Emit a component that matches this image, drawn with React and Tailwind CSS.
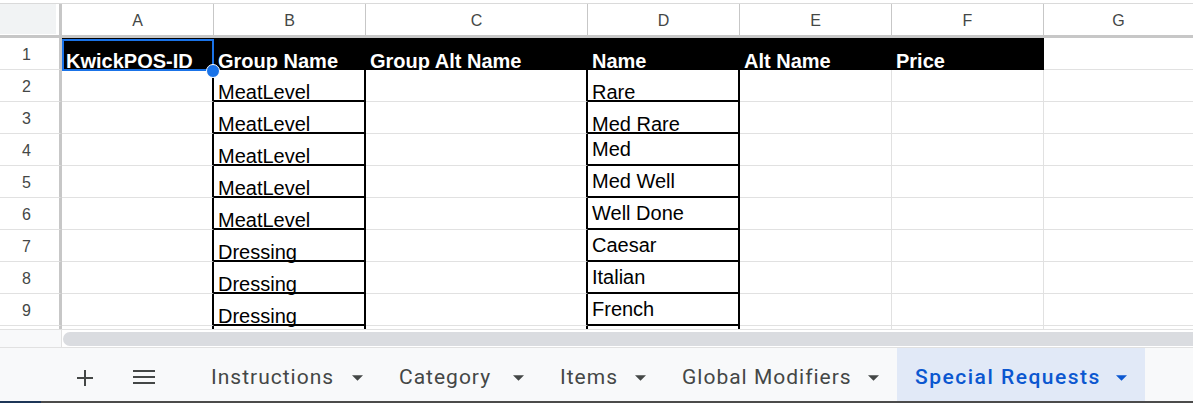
import clsx from 'clsx'

const letters = [
  { l: 'A', w: 'w-[152px]' },
  { l: 'B', w: 'w-[152px]' },
  { l: 'C', w: 'w-[222px]' },
  { l: 'D', w: 'w-[152px]' },
  { l: 'E', w: 'w-[152px]' },
  { l: 'F', w: 'w-[152px]' },
]

const headers = ['KwickPOS-ID', 'Group Name', 'Group Alt Name', 'Name', 'Alt Name', 'Price']

const rows = [
  ['MeatLevel', 'Rare'],
  ['MeatLevel', 'Med Rare'],
  ['MeatLevel', 'Med'],
  ['MeatLevel', 'Med Well'],
  ['MeatLevel', 'Well Done'],
  ['Dressing', 'Caesar'],
  ['Dressing', 'Italian'],
  ['Dressing', 'French'],
]

const tabs = [
  { name: 'Instructions', w: 'w-[188px]' },
  { name: 'Category', w: 'w-[161px]' },
  { name: 'Items', w: 'w-[122px]' },
  { name: 'Global Modifiers', w: 'w-[233px]' },
  { name: 'Special Requests', w: 'w-[248px]', active: true },
]

const cellBase = 'h-full shrink-0 flex items-end pl-[4px] whitespace-nowrap'
const grayCell = 'border-r border-b border-[#e1e1e1]'
const blackRight = 'border-r-2 border-r-black border-b border-b-[#e1e1e1]'
const boxed = 'border-r-2 border-b-2 border-black'

function RowHead({ n, className }) {
  return (
    <div className={clsx('w-[62px] h-full shrink-0 flex items-center justify-center pr-[6px] pt-[3px] text-[16px] leading-[20px] text-[#444746] border-r-[3px] border-r-[#c7c7c7] border-b border-b-[#e1e1e1]', className)}>
      {n}
    </div>
  )
}

function Caret({ className }) {
  return (
    <svg className={className} width="11" height="6" viewBox="0 0 10 5">
      <path d="M0 0L5 5L10 0Z" fill="currentColor" />
    </svg>
  )
}

export default function App() {
  return (
    <div className="w-[1193px] h-[404px] overflow-hidden bg-white font-['Liberation_Sans',Arial,sans-serif]">
      <div className="relative">
        {/* column letters */}
        <div className="pt-[3px]">
          <div className="border-t border-[#dadada] flex h-[35px] border-b-[3px] border-b-[#c7c7c7]">
            <div className="w-[62px] h-full shrink-0 border-r-[3px] border-[#c7c7c7]">
              <div className="w-[56px] h-[30px] bg-[#f1f3f4]"></div>
            </div>
            {letters.map((c) => (
              <div key={c.l} className={clsx('h-full shrink-0 flex items-center justify-center pt-[3px] text-[16px] text-[#444746] border-r border-[#c7c7c7]', c.w)}>
                {c.l}
              </div>
            ))}
            <div className="flex-1 h-full flex items-center justify-center pt-[3px] text-[16px] text-[#444746]">G</div>
          </div>
        </div>

        {/* row 1 headers */}
        <div className="flex h-[32px] text-[20px] leading-[16px]">
          <RowHead n={1} />
          {letters.map((c, i) => (
            <div key={c.l} className={clsx(cellBase, c.w, 'bg-black text-white font-bold border-r border-b border-black')}>
              {headers[i]}
            </div>
          ))}
          <div className="flex-1 h-full border-b border-[#e1e1e1]"></div>
        </div>

        {rows.map((r, i) => (
          <div key={i} className="flex h-[32px] text-[20px] leading-[16px] text-black">
            <RowHead n={i + 2} />
            <div className={clsx(cellBase, 'w-[152px]', blackRight)}></div>
            <div className={clsx(cellBase, 'w-[152px]', boxed)}>{r[0]}</div>
            <div className={clsx(cellBase, 'w-[222px]', blackRight)}></div>
            <div className={clsx(cellBase, 'w-[152px]', boxed, i >= 2 && 'pb-[7px]')}>{r[1]}</div>
            <div className={clsx(cellBase, 'w-[152px]', grayCell)}></div>
            <div className={clsx(cellBase, 'w-[152px]', grayCell)}></div>
            <div className="flex-1 h-full border-b border-[#e1e1e1]"></div>
          </div>
        ))}

        {/* partial row 10 */}
        <div className="flex h-[4px] border-b border-[#e1e1e1]">
          <div className="w-[62px] h-full shrink-0 border-r-[3px] border-[#c7c7c7]"></div>
          <div className="w-[152px] h-full shrink-0 border-r-2 border-black"></div>
          <div className="w-[152px] h-full shrink-0 border-r-2 border-black"></div>
          <div className="w-[222px] h-full shrink-0 border-r-2 border-black"></div>
          <div className="w-[152px] h-full shrink-0 border-r-2 border-black"></div>
          <div className="w-[152px] h-full shrink-0 border-r border-[#e1e1e1]"></div>
          <div className="w-[152px] h-full shrink-0 border-r border-[#e1e1e1]"></div>
          <div className="flex-1"></div>
        </div>

        {/* selection */}
        <div className="absolute left-[62px] top-[39px] w-[152px] h-[32px] border-2 border-[#1a73e8]"></div>
        <div className="absolute left-[206px] top-[64px] w-[14px] h-[14px] rounded-full bg-[#1a73e8] border-[1.5px] border-white"></div>
      </div>

      {/* horizontal scrollbar */}
      <div className="flex h-[18px] border-b border-[#e1e1e1]">
        <div className="w-[62px] h-full shrink-0 bg-[#f8f9fa] border-r border-[#e1e1e1]"></div>
        <div className="flex-1 ml-[1px] mt-[2px] h-[14px] rounded-l-full bg-[#dadce0]"></div>
      </div>

      {/* sheet tabs */}
      <div className="flex h-[53px] bg-[#f8f9fa] font-['Roboto',sans-serif] text-[21px] tracking-[1px] text-[#444746]">
        <div className="w-[77px] shrink-0"></div>
        <div className="flex items-center pt-[6px]">
          <svg width="16" height="16" viewBox="0 0 16 16">
            <path d="M8 0V16M0 8H16" stroke="#444746" strokeWidth="2" />
          </svg>
        </div>
        <div className="w-[40px] shrink-0"></div>
        <div className="flex items-center pt-[5px]">
          <svg width="22" height="14" viewBox="0 0 22 14">
            <path d="M0 1H22M0 7H22M0 13H22" stroke="#444746" strokeWidth="2" />
          </svg>
        </div>
        <div className="w-[38px] shrink-0"></div>
        {tabs.map((t) => (
          <div
            key={t.name}
            className={clsx(
              'shrink-0 flex items-center justify-between px-[18px] pt-[6px]',
              t.w,
              t.active && 'bg-[#e1e9f7] text-[#0b57d0] font-medium tracking-[1.5px]'
            )}
          >
            <span className="whitespace-nowrap">{t.name}</span>
            <Caret />
          </div>
        ))}
      </div>

      <div className="flex h-[2px]">
        <div className="w-[41px] bg-[#1d3557]"></div>
        <div className="flex-1 bg-[#4b4b4b]"></div>
      </div>
    </div>
  )
}
